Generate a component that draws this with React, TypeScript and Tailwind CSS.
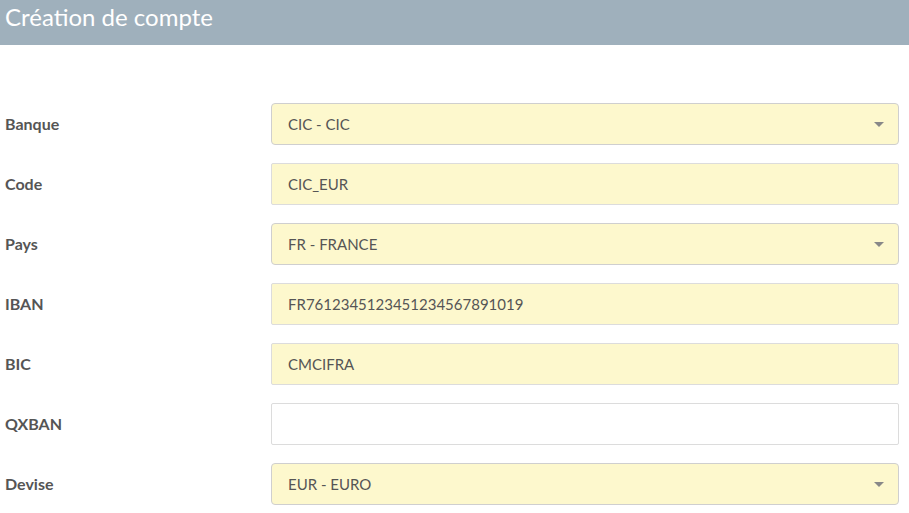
type Field = { label: string; value: string; kind: "select" | "input" };

const fields: Field[] = [
  { label: "Banque", value: "CIC - CIC", kind: "select" },
  { label: "Code", value: "CIC_EUR", kind: "input" },
  { label: "Pays", value: "FR - FRANCE", kind: "select" },
  { label: "IBAN", value: "FR7612345123451234567891019", kind: "input" },
  { label: "BIC", value: "CMCIFRA", kind: "input" },
  { label: "QXBAN", value: "", kind: "input" },
  { label: "Devise", value: "EUR - EURO", kind: "select" },
];

function Caret() {
  return (
    <svg width="10" height="5" viewBox="0 0 10 5" className="shrink-0">
      <path d="M0 0 L10 0 L5 5 Z" fill="#888" />
    </svg>
  );
}

export default function App() {
  return (
    <div
      className="min-h-screen w-[909px] bg-white text-[#555]"
      style={{ fontFamily: "Lato, 'Open Sans', sans-serif" }}
    >
      <header className="flex h-[45px] items-start bg-[#9fb0bc] px-[5px] pt-[1px]">
        <h1 className="text-[24px] leading-[32px] text-white">Création de compte</h1>
      </header>

      <form className="flex flex-col gap-[18px] pt-[58px] pr-[10px]">
        {fields.map((f) => (
          <div key={f.label} className="flex items-center">
            <label className="w-[271px] shrink-0 pl-[5px] text-[16px] font-bold text-[#555]">
              {f.label}
            </label>
            {f.kind === "select" ? (
              <div className="flex h-[42px] flex-1 items-center justify-between rounded-[4px] border border-[#cfcfcf] bg-[#fdf8cd] pl-[16px] pr-[14px] text-[15px] text-[#555]">
                <span>{f.value}</span>
                <Caret />
              </div>
            ) : (
              <div
                className={`flex h-[42px] flex-1 items-center rounded-[2px] border border-[#dcdcdc] pl-[16px] text-[15px] text-[#555] ${
                  f.value ? "bg-[#fdf8cd]" : "bg-white"
                }`}
              >
                {f.value}
              </div>
            )}
          </div>
        ))}
      </form>
    </div>
  );
}
